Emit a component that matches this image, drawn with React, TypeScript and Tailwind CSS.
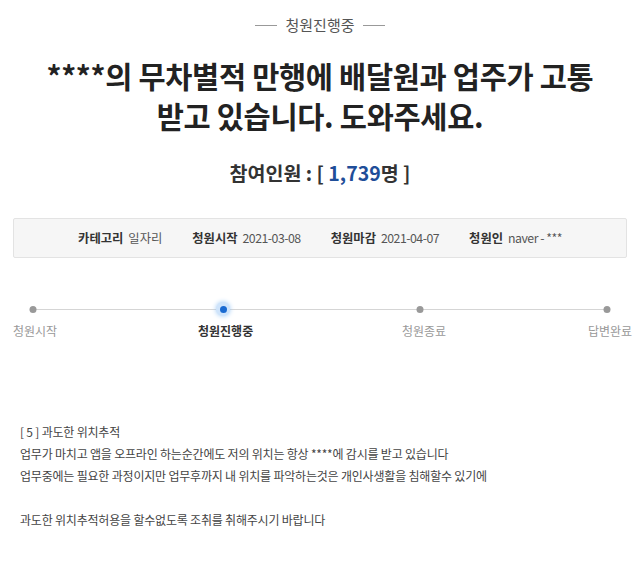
import React from "react";

const font = { fontFamily: '"Noto Sans CJK KR", "Noto Sans", sans-serif' };

export default function App() {
  const steps = [
    { label: "청원시작", active: false },
    { label: "청원진행중", active: true },
    { label: "청원종료", active: false },
    { label: "답변완료", active: false },
  ];
  return (
    <div className="w-[640px] h-[576px] bg-white text-[#333] overflow-hidden" style={font}>
      <div className="flex items-center justify-center gap-[8px] pt-[14px]">
        <div className="w-[22px] h-px bg-[#999]" />
        <span className="text-[15px] leading-[22px] text-[#555]">청원진행중</span>
        <div className="w-[22px] h-px bg-[#999]" />
      </div>
      <h1 className="mt-[19px] text-center text-[29.5px] leading-[40px] font-bold text-[#222] tracking-[-0.3px]">
        ****의 무차별적 만행에 배달원과 업주가 고통
        <br />
        받고 있습니다. 도와주세요.
      </h1>
      <div className="mt-[24px] text-center text-[19.5px] leading-[28px] font-bold text-[#333]">
        참여인원 : [ <span className="text-[#1f4e99]">1,739</span>명 ]
      </div>
      <div className="mx-[13px] mt-[31px] h-[40px] bg-[#f6f6f6] border border-[#e3e3e3] rounded-[2px] flex items-center justify-center gap-[30px] text-[12.3px]">
        <div className="flex items-center gap-[5px]">
          <b className="text-[#333]">카테고리</b>
          <span className="text-[#555]">일자리</span>
        </div>
        <div className="flex items-center gap-[5px]">
          <b className="text-[#333]">청원시작</b>
          <span className="text-[#555] tracking-[-0.5px]">2021-03-08</span>
        </div>
        <div className="flex items-center gap-[5px]">
          <b className="text-[#333]">청원마감</b>
          <span className="text-[#555] tracking-[-0.5px]">2021-04-07</span>
        </div>
        <div className="flex items-center gap-[5px]">
          <b className="text-[#333]">청원인</b>
          <span className="text-[#555] tracking-[-0.5px]">naver - ***</span>
        </div>
      </div>
      <div className="relative mt-[45px] mx-[33px] h-[30px]">
        <div className="absolute left-0 right-0 top-[6px] h-px bg-[#d5d5d5]" />
      </div>
      <div className="relative -mt-[30px] h-[40px]">
        {[
          { x: 33, i: 0 },
          { x: 223, i: 1 },
          { x: 420, i: 2 },
          { x: 607, i: 3 },
        ].map(({ x, i }) => (
          <div key={i} className="absolute top-0" style={{ left: x }}>
            <div className="absolute -translate-x-1/2 top-[3px]">
              {steps[i].active ? (
                <div className="w-[14px] h-[14px] -mt-[4px] rounded-full bg-[#cfe4fb] flex items-center justify-center shadow-[0_0_5px_#9cc8f5]">
                  <div className="w-[7px] h-[7px] rounded-full bg-[#1a6ad1]" />
                </div>
              ) : (
                <div className="w-[7px] h-[7px] rounded-full bg-[#999]" />
              )}
            </div>
          </div>
        ))}
      </div>
      <div className="-mt-[21px] relative h-[24px] text-[12px]">
        <span className="absolute left-[13px] text-[#999]">청원시작</span>
        <span className="absolute left-[198px] font-bold text-[#333]">청원진행중</span>
        <span className="absolute left-[402px] text-[#999]">청원종료</span>
        <span className="absolute left-[588px] text-[#999]">답변완료</span>
      </div>
      <div className="mt-[75px] pl-[20px] text-[12px] leading-[22px] text-[#444] tracking-[-0.2px]">
        <p>[ 5 ] 과도한 위치추적</p>
        <p>업무가 마치고 앱을 오프라인 하는순간에도 저의 위치는 항상 ****에 감시를 받고 있습니다</p>
        <p>업무중에는 필요한 과정이지만 업무후까지 내 위치를 파악하는것은 개인사생활을 침해할수 있기에</p>
        <p>&nbsp;</p>
        <p>과도한 위치추적허용을 할수없도록 조취를 취해주시기 바랍니다</p>
      </div>
    </div>
  );
}
